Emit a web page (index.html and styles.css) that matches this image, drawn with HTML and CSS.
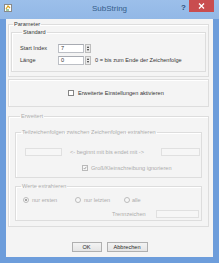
FILE: index.html
```html
<!DOCTYPE html>
<html>
<head>
<meta charset="utf-8">
<link rel="stylesheet" href="styles.css">
</head>
<body>
<div class="window">
  <div class="titlebar">
    <div class="tb-left">
      <svg class="appicon" width="8" height="8" viewBox="0 0 8 8">
        <rect x="0.5" y="0.5" width="7" height="7" fill="#fff" stroke="#8a8a8a" stroke-width="1"/>
        <path d="M2 5 L4 2 L6 4" fill="none" stroke="#d9a21b" stroke-width="1.2"/>
        <path d="M2 6 L5 6" stroke="#4a9a3a" stroke-width="1"/>
      </svg>
    </div>
    <div class="title">SubString</div>
    <div class="tb-right">
      <span class="help">?</span>
      <span class="close">
        <svg width="7" height="6" viewBox="0 0 7 6"><path d="M1 0.5 L6 5.5 M6 0.5 L1 5.5" stroke="#fff" stroke-width="1.3"/></svg>
      </span>
    </div>
  </div>
  <div class="client">
    <fieldset class="grp g-param">
      <legend class="lg lg-param">Parameter</legend>
      <fieldset class="grp g-std">
        <legend class="lg lg-std">Standard</legend>
        <div class="row r-start">
          <span class="lbl">Start Index</span>
          <span class="inp num">7</span>
          <span class="spin"><span class="up"></span><span class="down"></span></span>
        </div>
        <div class="row r-len">
          <span class="lbl">Länge</span>
          <span class="inp num">0</span>
          <span class="spin"><span class="up"></span><span class="down"></span></span>
          <span class="hint">0 = bis zum Ende der Zeichenfolge</span>
        </div>
      </fieldset>
    </fieldset>

    <div class="frame cb-frame">
      <span class="cb"></span>
      <span class="cbtext">Erweiterte Einstellungen aktivieren</span>
    </div>

    <fieldset class="grp g-ext dis">
      <legend class="lg lg-ext">Erweitert</legend>
      <fieldset class="grp g-sub">
        <legend class="lg lg-sub">Teilzeichenfolgen zwischen Zeichenfolgen extrahieren</legend>
        <div class="row r-between">
          <span class="inp dinp w-left"></span>
          <span class="between">&lt;- beginnt mit bis endet mit -&gt;</span>
          <span class="inp dinp w-right"></span>
        </div>
        <div class="row r-case">
          <span class="cb dcb checked">
            <svg width="6" height="6" viewBox="0 0 6 6"><path d="M1 3 L2.5 4.6 L5 1.2" fill="none" stroke="#8c8c8c" stroke-width="1.1"/></svg>
          </span>
          <span class="cbtext">Groß/Kleinschreibung ignorieren</span>
        </div>
      </fieldset>
      <fieldset class="grp g-vals">
        <legend class="lg lg-sub">Werte extrahieren</legend>
        <div class="row r-radios">
          <span class="ritem ri1"><span class="radio on"></span><span>nur ersten</span></span>
          <span class="ritem ri2"><span class="radio"></span><span>nur letzten</span></span>
          <span class="ritem ri3"><span class="radio"></span><span>alle</span></span>
        </div>
        <div class="row r-trenn">
          <span class="trenn">Trennzeichen</span>
          <span class="inp dinp w-trenn"></span>
        </div>
      </fieldset>
    </fieldset>

    <div class="buttons">
      <button class="btn b-ok">OK</button>
      <button class="btn b-cancel">Abbrechen</button>
    </div>
  </div>
</div>
</body>
</html>
```

FILE: styles.css
```css
html, body {
  margin: 0;
  padding: 0;
  background: #ffffff;
}
body {
  font-family: "Liberation Sans", "DejaVu Sans", sans-serif;
  font-size: 5.6px;
  line-height: 7px;
  color: #363636;
}
.window {
  width: 219px;
  height: 263px;
  box-sizing: border-box;
  background: #6d9ddb;
  display: flex;
  flex-direction: column;
}
.titlebar {
  height: 19px;
  flex: none;
  background: linear-gradient(#9cbfea, #92b8e6);
  display: grid;
  grid-template-columns: 1fr auto 1fr;
  align-items: start;
}
.tb-left {
  padding: 4px 0 0 4px;
  display: flex;
}
.appicon { display: block; }
.title {
  font-family: "Liberation Sans", "DejaVu Sans", sans-serif;
  font-size: 8px;
  line-height: 10px;
  padding-top: 4px;
  color: #355c8a;
}
.tb-right {
  display: flex;
  justify-content: flex-end;
  align-items: flex-start;
  padding-right: 5px;
}
.help {
  font-size: 8px;
  line-height: 10px;
  font-weight: bold;
  color: #2b4f7a;
  margin-top: 3px;
  margin-right: 3px;
}
.close {
  width: 25px;
  height: 12px;
  background: #c94d4f;
  display: flex;
  align-items: center;
  justify-content: center;
}
.close svg { display: block; }

.client {
  flex: 1;
  margin: 0 6px 6px 6px;
  background: #f4f4f4;
  padding: 2px 4px 0 2px;
  display: flex;
  flex-direction: column;
}

.grp {
  margin: 0;
  padding: 0;
  border: 1px solid #dddddd;
  box-shadow: inset 1px 1px 0 #ffffff;
  min-width: 0;
}
.lg {
  padding: 0 1px;
  line-height: 7px;
  height: 7px;
}
.lg-param { margin-left: 2px; }
.lg-std { margin-left: 2px; }
.lg-ext { margin-left: 5px; }
.lg-sub { margin-left: 5px; }

.g-param { padding: 1px 2px 4px 2px; }
.g-std { padding: 0 0 6px 8px; }

.row {
  display: flex;
  align-items: center;
  height: 9px;
}
.r-start { margin-top: 8px; }
.r-len { margin-top: 3px; }
.lbl { width: 38px; }
.inp {
  box-sizing: border-box;
  height: 9px;
  background: #ffffff;
  border: 1px solid #bcbfc5;
  border-top-color: #a8abb2;
}
.num {
  width: 26px;
  padding-left: 2px;
  line-height: 7px;
}
.spin {
  box-sizing: border-box;
  width: 6px;
  height: 9px;
  margin-left: 1px;
  border: 1px solid #bdbdbd;
  background: #eaeaea;
  display: flex;
  flex-direction: column;
  justify-content: space-around;
  align-items: center;
}
.spin .up {
  width: 0; height: 0;
  border-left: 1.5px solid transparent;
  border-right: 1.5px solid transparent;
  border-bottom: 2px solid #333;
}
.spin .down {
  width: 0; height: 0;
  border-left: 1.5px solid transparent;
  border-right: 1.5px solid transparent;
  border-top: 2px solid #333;
}
.hint { margin-left: 4px; }

.frame {
  border: 1px solid #dddddd;
  box-shadow: inset 1px 1px 0 #ffffff;
}
.cb-frame {
  margin-top: 2px;
  height: 28px;
  box-sizing: border-box;
  display: flex;
  align-items: center;
  padding-left: 59px;
}
.cb {
  box-sizing: border-box;
  width: 6px;
  height: 6px;
  border: 1px solid #858585;
  background: #ffffff;
  margin-right: 4px;
  display: flex;
  align-items: center;
  justify-content: center;
}
.cb svg { display: block; }

.dis { color: #acacac; }
.g-ext {
  margin-top: 6px;
  padding: 0 6px 5px 6px;
}
.g-sub {
  margin-top: 9px;
  padding: 0 0 5px 0;
}
.r-between {
  margin-top: 12px;
  height: 8px;
}
.dinp {
  height: 8px;
  background: #f6f6f6;
  border: 1px solid #e0e0e0;
}
.w-left { width: 37px; margin-left: 9px; }
.between { margin-left: 8px; width: 91px; white-space: nowrap; }
.w-right { width: 39px; }
.r-case {
  margin-top: 8px;
  height: 8px;
  padding-left: 66px;
}
.dcb {
  border-color: #bababa;
  background: #f7f7f7;
  margin-right: 3px;
}

.g-vals {
  margin-top: 5px;
  padding: 0 0 2px 0;
}
.r-radios {
  margin-top: 6px;
  height: 8px;
  padding-left: 7px;
}
.ritem {
  display: flex;
  align-items: center;
}
.ri1 { width: 52px; }
.ri2 { width: 49px; }
.radio {
  box-sizing: border-box;
  width: 6px;
  height: 6px;
  border-radius: 50%;
  border: 1px solid #bcbcbc;
  background: #f7f7f7;
  margin-right: 3px;
  display: flex;
  align-items: center;
  justify-content: center;
}
.radio.on::after {
  content: "";
  width: 2px;
  height: 2px;
  border-radius: 50%;
  background: #8a8a8a;
}
.ri3 .radio { margin-right: 2px; }
.r-trenn {
  margin-top: 6px;
  height: 8px;
  padding-left: 96px;
}
.trenn { width: 44px; }
.w-trenn { width: 43px; }

.buttons {
  margin-top: 15px;
  display: flex;
  justify-content: center;
  gap: 5px;
  padding-left: 2px;
}
.btn {
  box-sizing: border-box;
  height: 10px;
  margin: 0;
  padding: 0;
  font-family: "Liberation Sans", "DejaVu Sans", sans-serif;
  font-size: 5.6px;
  line-height: 8px;
  color: #2a2a2a;
  background: linear-gradient(#f3f3f3, #e5e5e5);
  border: 1px solid #b0b0b0;
  border-radius: 0;
}
.b-ok { width: 30px; }
.b-cancel { width: 41px; }
```
